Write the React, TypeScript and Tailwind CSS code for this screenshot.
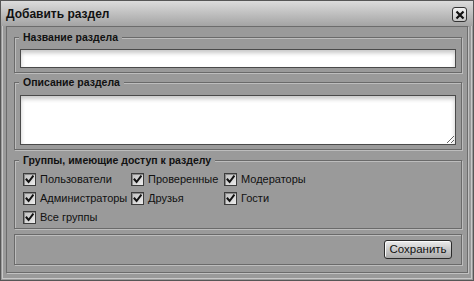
import React from "react"

function Check() {
  return (
    <span className="flex h-[13px] w-[13px] shrink-0 items-center justify-center border border-[#3c3c3c] bg-gradient-to-br from-[#bdbdbd] to-[#ececec] shadow-[inset_1px_1px_0_#8a8a8a]">
      <svg width="9" height="9" viewBox="0 0 9 9">
        <path d="M1.5 4.5 L3.6 7 L7.8 1.4" fill="none" stroke="#111" strokeWidth="2" strokeLinecap="square" />
      </svg>
    </span>
  )
}

function Option({ label }: { label: string }) {
  return (
    <label className="flex h-[19px] items-center gap-[4px] text-[11px] text-[#111]">
      <Check />
      <span>{label}</span>
    </label>
  )
}

const fieldset = "border border-[#6a6a6a] shadow-[inset_1px_1px_0_#bdbdbd,1px_1px_0_#bdbdbd]"
const legend = "ml-[4px] bg-[#9a9a9a] px-[4px] text-[10.5px] font-bold leading-[13px] text-[#111]"

export default function App() {
  return (
    <div
      className="flex h-[281px] w-[474px] flex-col border border-[#565656] bg-[#9a9a9a]"
      style={{ fontFamily: '"Liberation Sans", Arial, sans-serif' }}
    >
      {/* title bar */}
      <div className="flex h-[25px] shrink-0 items-center justify-between bg-gradient-to-b from-[#dcdcdc] to-[#a4a4a4] pl-[5px] pr-[6px]">
        <span className="text-[12px] font-bold text-[#111]">Добавить раздел</span>
        <button className="mt-[2px] flex h-[15px] w-[15px] items-center justify-center rounded-[3px] border border-[#333] bg-gradient-to-b from-[#f2f2f2] to-[#c6c6c6]">
          <svg width="10" height="10" viewBox="0 0 10 10">
            <path d="M1.5 1.5 L8.5 8.5 M8.5 1.5 L1.5 8.5" stroke="#111" strokeWidth="2.2" />
          </svg>
        </button>
      </div>

      <div className="flex-1 px-px pb-px">
        <div className="flex h-full flex-col border-x border-b border-[#c8c8c8] px-[3px] pb-[5px]">
          <div className="flex flex-1 flex-col border border-[#6c6c6c] pl-[7px] pr-[5px] pt-[4px] shadow-[1px_1px_0_#c2c2c2]">
            <fieldset className={fieldset}>
              <legend className={legend}>Название раздела</legend>
              <div className="px-[5px] pb-[4px] pt-[5px]">
                <input
                  type="text"
                  className="block h-[19px] w-full border border-[#4a4a4a] bg-white shadow-[inset_0_3px_4px_rgba(0,0,0,0.22)] outline-none"
                />
              </div>
            </fieldset>

            <fieldset className={`${fieldset} mt-[3px]`}>
              <legend className={legend}>Описание раздела</legend>
              <div className="px-[5px] pb-[4px] pt-[6px]">
                <textarea className="block h-[50px] w-full border border-[#4a4a4a] bg-white shadow-[inset_0_3px_4px_rgba(0,0,0,0.22)] outline-none" />
              </div>
            </fieldset>

            <fieldset className={`${fieldset} mt-[4px]`}>
              <legend className={legend}>Группы, имеющие доступ к разделу</legend>
              <div className="grid grid-cols-[108px_93px_1fr] pb-[1px] pl-[8px] pt-[3px]">
                <Option label="Пользователи" />
                <Option label="Проверенные" />
                <Option label="Модераторы" />
                <Option label="Администраторы" />
                <Option label="Друзья" />
                <Option label="Гости" />
                <Option label="Все группы" />
              </div>
            </fieldset>

            <div className={`${fieldset} mt-[5px] flex justify-end pb-[5px] pr-[9px] pt-[5px]`}>
              <button className="h-[19px] w-[68px] rounded-[3px] border border-[#2a2a2a] bg-gradient-to-b from-[#ececec] to-[#a9a9a9] text-[11.5px] leading-none text-[#111] shadow-[inset_1px_1px_0_#fafafa]">
                Сохранить
              </button>
            </div>
          </div>
        </div>
      </div>
    </div>
  )
}
